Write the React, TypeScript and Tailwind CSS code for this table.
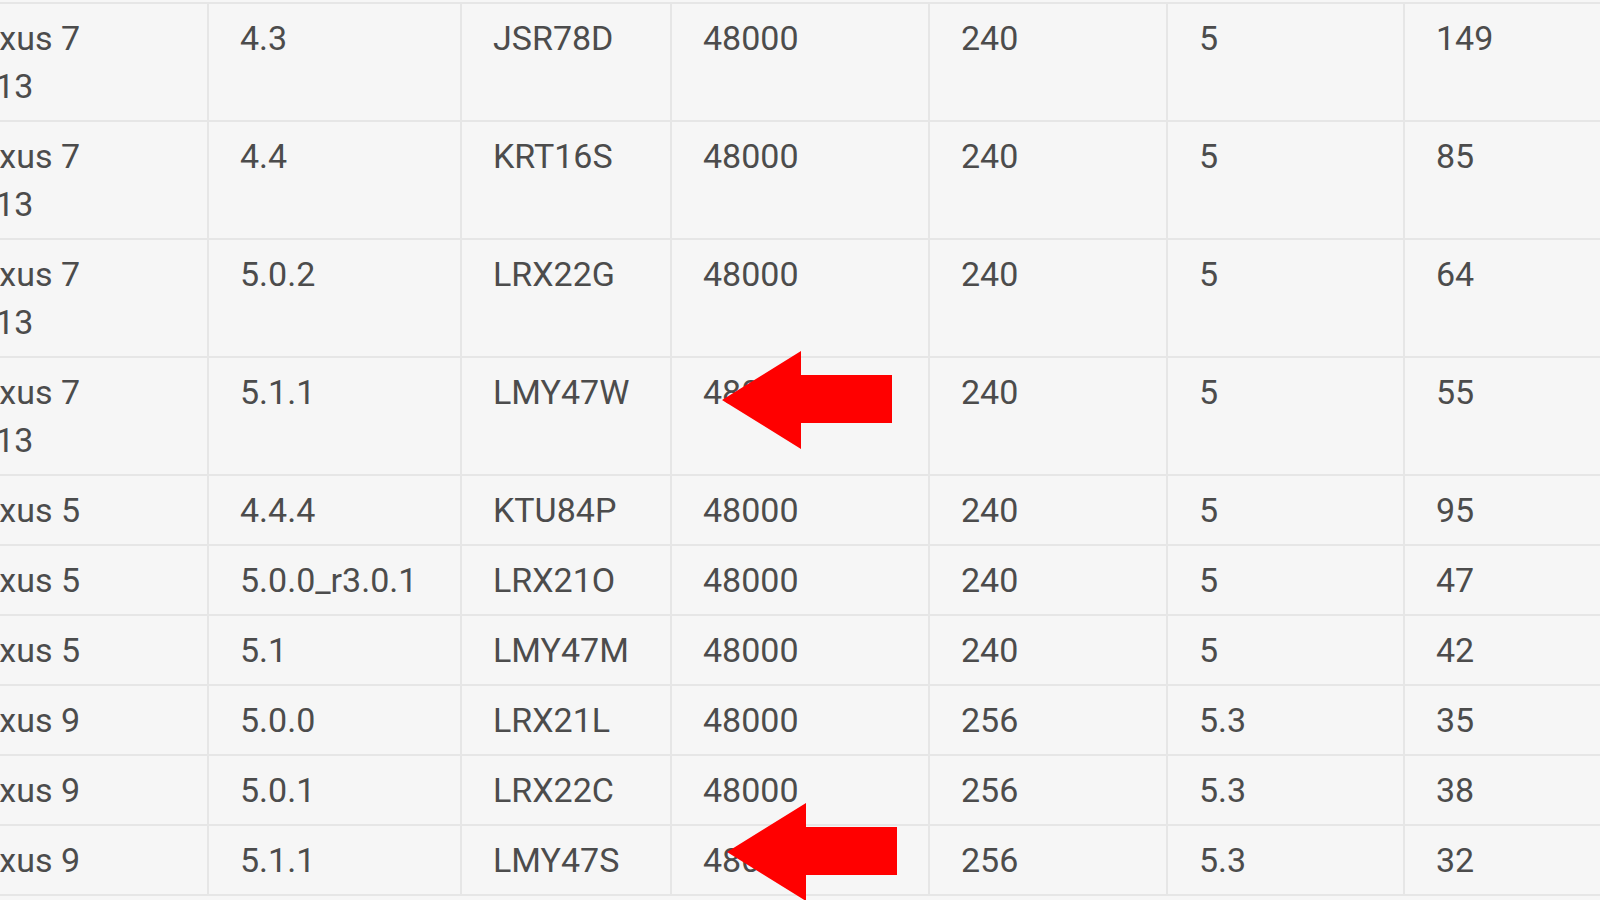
import React from 'react';

type Row = { device: string[]; version: string; build: string; rate: string; buffer: string; cdd: string; latency: string };

const rows: Row[] = [
  { device: ['Nexus 7', '2013'], version: '4.3', build: 'JSR78D', rate: '48000', buffer: '240', cdd: '5', latency: '149' },
  { device: ['Nexus 7', '2013'], version: '4.4', build: 'KRT16S', rate: '48000', buffer: '240', cdd: '5', latency: '85' },
  { device: ['Nexus 7', '2013'], version: '5.0.2', build: 'LRX22G', rate: '48000', buffer: '240', cdd: '5', latency: '64' },
  { device: ['Nexus 7', '2013'], version: '5.1.1', build: 'LMY47W', rate: '48000', buffer: '240', cdd: '5', latency: '55' },
  { device: ['Nexus 5'], version: '4.4.4', build: 'KTU84P', rate: '48000', buffer: '240', cdd: '5', latency: '95' },
  { device: ['Nexus 5'], version: '5.0.0_r3.0.1', build: 'LRX21O', rate: '48000', buffer: '240', cdd: '5', latency: '47' },
  { device: ['Nexus 5'], version: '5.1', build: 'LMY47M', rate: '48000', buffer: '240', cdd: '5', latency: '42' },
  { device: ['Nexus 9'], version: '5.0.0', build: 'LRX21L', rate: '48000', buffer: '256', cdd: '5.3', latency: '35' },
  { device: ['Nexus 9'], version: '5.0.1', build: 'LRX22C', rate: '48000', buffer: '256', cdd: '5.3', latency: '38' },
  { device: ['Nexus 9'], version: '5.1.1', build: 'LMY47S', rate: '48000', buffer: '256', cdd: '5.3', latency: '32' },
];

const cell = 'px-[31px] pt-[10px] pb-[10px] border-l-2 border-[#e6e6e6] first:border-l-0';

function Arrow({ className }: { className: string }) {
  return (
    <svg className={className} width="172" height="98" viewBox="0 0 172 98">
      <polygon points="0,49 79,0 79,24 170,24 170,72 79,72 79,98" fill="#ff0000" />
    </svg>
  );
}

export default function App() {
  return (
    <div
      className="relative w-[1600px] h-[900px] overflow-hidden bg-[#f6f6f6] text-[#4c4c4c] text-[34px] leading-[48px]"
      style={{ fontFamily: 'Roboto, "Liberation Sans", sans-serif' }}
    >
      <div className="ml-[-74px] pt-[2px]">
        <div className="border-b-2 border-[#e6e6e6]" />
        {rows.map((r, i) => (
          <div
            key={i}
            className="grid grid-cols-[281px_253px_210px_258px_238px_237px_300px] border-b-2 border-[#e6e6e6]"
          >
            <div className={cell}>
              {r.device.map((l) => (
                <div key={l}>{l}</div>
              ))}
            </div>
            <div className={cell}>{r.version}</div>
            <div className={cell}>{r.build}</div>
            <div className={cell}>{r.rate}</div>
            <div className={cell}>{r.buffer}</div>
            <div className={cell}>{r.cdd}</div>
            <div className={cell}>{r.latency}</div>
          </div>
        ))}
      </div>

      <Arrow className="absolute left-[722px] top-[351px]" />
      <Arrow className="absolute left-[727px] top-[803px]" />
    </div>
  );
}
